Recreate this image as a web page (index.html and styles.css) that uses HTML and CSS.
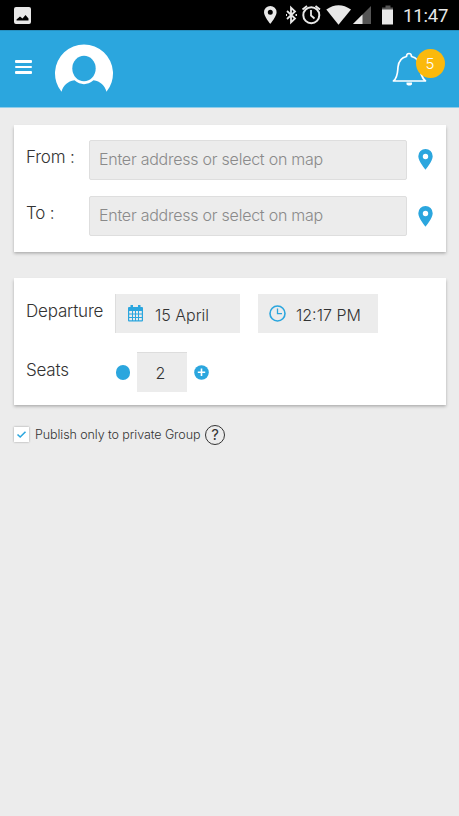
FILE: index.html
```html
<!DOCTYPE html>
<html lang="en">
<head>
<meta charset="utf-8">
<title>Publish a ride</title>
<link rel="stylesheet" href="styles.css">
</head>
<body>
<div class="status">
  <svg class="photo" width="17" height="17" viewBox="0 0 17 17"><path fill="#e8e8e8" fill-rule="evenodd" d="M2 0H15Q17 0 17 2V15Q17 17 15 17H2Q0 17 0 15V2Q0 0 2 0ZM2.500 13.500H14.500V11.500L11.500 8 8.500 11.500 6 9.500 2.500 12.500Z"/></svg>
  <svg class="icons" width="131" height="22" viewBox="262 4 131 22" fill="#e8e8e8">
    <path fill-rule="evenodd" d="M270.300 6a6.300 6.300 0 0 1 6.300 6.300C276.600 16.500 270.300 24 270.300 24S264 16.500 264 12.300A6.300 6.300 0 0 1 270.300 6ZM270.300 9.700a2.500 2.500 0 1 0 0 5 2.500 2.500 0 0 0 0-5Z"/>
    <path fill="none" stroke="#e8e8e8" stroke-width="1.800" d="M287 11 295 18.500 291 22.300V7.700L295 11.500 287 19M286 15h1M295.500 15h1.500"/>
    <circle cx="311.300" cy="15.200" r="8" fill="none" stroke="#e8e8e8" stroke-width="2"/>
    <path fill="none" stroke="#e8e8e8" stroke-width="1.800" d="M311 10V15.500L314.500 18.500M302.500 9.500 307 6M320 9.500 315.500 6"/>
    <path d="M326.300 9.500Q338.500 1 351 9.500L338.500 24.800Z"/>
    <path fill="#555" d="M371 6V24H353Z"/><path d="M362.500 14.500V24H353Z"/>
    <path fill="#555" d="M385.500 5.500h5v2H394v3H382v-3h3.500z"/><path d="M382 9.500H394V24.500H382Z"/>
  </svg>
  <span class="clock">11:47</span>
</div>
<header class="header">
  <div class="menu"><i></i><i></i><i></i></div>
  <svg class="avatar" width="60" height="50" viewBox="54 42.500 60 50"><path fill="#fff" fill-rule="evenodd" d="M61.500 91.300A29 29 0 1 1 106.500 91.300C104.500 84.500 100.500 81 93.500 79.800Q84 87.500 74.500 79.800C67.500 81 63.500 84.500 61.500 91.300Z"/><ellipse cx="84" cy="68" rx="11.700" ry="12.700" fill="#2ba6de"/></svg>
  <div class="bell">
    <svg width="36" height="36" viewBox="392 51 36 36"><path fill="none" stroke="#fff" stroke-width="1.700" stroke-linejoin="round" d="M393.500 81C398 77 397.500 72 398 67Q399 58 406.500 56.500Q406.500 53.500 409 53.500T411.500 56.500Q419 58 420 67C420.500 72 421 77 425.500 81Z"/><path fill="#fff" d="M406.500 82.500h5.500v2l-1.500 1h-2.500l-1.500-1z"/></svg>
    <span class="badge">5</span>
  </div>
</header>
<main>
  <section class="card">
    <div class="row">
      <label class="from">From :</label><div class="input">Enter address or select on map</div>
      <svg class="pin" width="15" height="21" viewBox="0 0 15 21"><path fill="#2ba6de" fill-rule="evenodd" d="M7.500 0A7.200 7.200 0 0 1 14.700 7.200C14.700 12 7.500 20.700 7.500 20.700S.300 12 .300 7.200A7.200 7.200 0 0 1 7.500 0ZM7.500 4.800a2.700 2.700 0 1 0 0 5.400 2.700 2.700 0 0 0 0-5.400Z"/></svg>
    </div>
    <div class="row">
      <label class="to">To :</label><div class="input">Enter address or select on map</div>
      <svg class="pin low" width="15" height="21" viewBox="0 0 15 21"><path fill="#2ba6de" fill-rule="evenodd" d="M7.500 0A7.200 7.200 0 0 1 14.700 7.200C14.700 12 7.500 20.700 7.500 20.700S.300 12 .300 7.200A7.200 7.200 0 0 1 7.500 0ZM7.500 4.800a2.700 2.700 0 1 0 0 5.400 2.700 2.700 0 0 0 0-5.400Z"/></svg>
    </div>
  </section>
  <section class="card second">
    <div class="row">
      <label class="dep">Departure</label>
      <div class="field date">
        <svg width="15" height="17" viewBox="0 0 15 17"><path fill="#2ba6de" fill-rule="evenodd" d="M1 2H2.500V0H5V2H10V0H12.500V2H14Q15 2 15 3V15.500Q15 16.500 14 16.500H1Q0 16.500 0 15.500V3Q0 2 1 2ZM1.200 6V8.500H4V6ZM5 6V8.500H7V6ZM8 6V8.500H10V6ZM11 6V8.500H13.800V6ZM1.200 9.500V12H4V9.500ZM5 9.500V12H7V9.500ZM8 9.500V12H10V9.500ZM11 9.500V12H13.800V9.500ZM1.200 13V15.300H4V13ZM5 13V15.300H7V13ZM8 13V15.300H10V13ZM11 13V15.300H13.800V13Z"/></svg>
        <span>15 April</span>
      </div>
      <div class="field time">
        <svg width="17" height="17" viewBox="0 0 17 17" fill="none" stroke="#2ba6de" stroke-width="1.600"><circle cx="8.500" cy="8.500" r="7.500"/><path stroke-width="1.300" d="M8.500 3.500V8.700H13"/></svg>
        <span>12:17 PM</span>
      </div>
    </div>
    <div class="row seats">
      <label class="seat">Seats</label>
      <span class="dot"></span>
      <div class="count">2</div>
      <svg class="plus" width="15" height="15" viewBox="0 0 15 15"><circle cx="7.500" cy="7.500" r="7.300" fill="#2ba6de"/><path stroke="#fff" stroke-width="1.600" d="M3.800 7.300H11.200M7.500 3.600V11"/></svg>
    </div>
  </section>
  <div class="publish">
    <span class="box"><svg width="15" height="15" viewBox="0 0 15 15"><path fill="none" stroke="#2ba6de" stroke-width="1.600" d="M3.500 7.500 6.200 10 11.500 4.800"/></svg></span>
    <span class="ptext">Publish only to private Group</span>
    <span class="help">?</span>
  </div>
</main>
</body>
</html>
```
FILE: styles.css
```css
* { box-sizing: border-box; }
body { margin: 0; background: #ececec; color: #333; font-family: Inter, "Liberation Sans", sans-serif; font-weight: 300; font-size: 16px; width: 459px; height: 816px; overflow: hidden; }
svg { display: block; flex: none; }
.status { height: 30px; background: #000; display: flex; align-items: center; padding-left: 14px; }
.icons { margin-left: 231px; }
.clock { margin-left: 10px; color: #e8e8e8; font: 400 18.500px/30px Roboto, sans-serif; letter-spacing: -.15px; padding-top: 2px; white-space: nowrap; }
.header { height: 78px; background: #2ba6de; border-bottom: 1px solid #8fcdea; border-top: 1px solid #2790c0; display: flex; align-items: flex-start; padding-left: 15px; }
.menu { width: 17px; display: grid; gap: 3px; margin-top: 29px; }
.menu i { height: 2.500px; background: #fff; border-radius: 1px; }
.avatar { margin: 12px 0 0 22px; }
.bell { position: relative; margin: 20px 0 0 278px; }
.badge { position: absolute; left: 23.500px; top: -2px; width: 29px; height: 29px; border-radius: 50%; background: #fbb90c; color: #fff; font-size: 15px; line-height: 30px; text-align: center; }
main { padding: 17px 13px 0 14px; }
.card { height: 127px; background: #fff; padding: 15px 12px; box-shadow: 0 1.500px 3px #aaa; }
.second { margin-top: 26px; padding-top: 16px; }
.row { display: flex; height: 40px; align-items: flex-start; }
.row + .row { margin-top: 16px; }
label { width: 63px; padding-top: 7px; font-size: 17px; line-height: 21px; letter-spacing: -.2px; white-space: nowrap; flex: none; }
.input { width: 318px; height: 40px; border: 1px solid #dedede; border-radius: 2px; background: #ececec; color: #8a8a8a; padding-left: 9px; line-height: 37px; letter-spacing: -.24px; white-space: nowrap; }
.pin { margin: 9px 0 0 10.500px; }
.low { margin-top: 10px; }
.dep, .seat { width: 89px; }
.field { height: 39px; background: #ececec; display: flex; align-items: center; white-space: nowrap; }
.field span { padding-top: 2px; }
.date { width: 125px; border-left: 1px solid #ddd; padding-left: 12px; gap: 12px; }
.time { width: 120px; margin-left: 17.500px; padding-left: 11.500px; gap: 10px; }
.seats { padding-top: 2px; }
.seat { padding-top: 8px; }
.dot { width: 14.500px; height: 14.500px; border-radius: 50%; background: #2ba6de; margin: 13px 0 0 .5px; }
.count { width: 50px; height: 40px; margin-left: 7px; background: #ececec; border-top: 1px solid #ddd; line-height: 41px; text-align: center; padding-right: 3px; font-size: 16px; }
.plus { margin: 13px 0 0 7px; }
.publish { display: flex; align-items: center; height: 20px; margin-top: 20px; }
.box { width: 15px; height: 15px; background: #fff; box-shadow: 0 0 2px #999; margin-top: -2px; }
.ptext { margin-left: 6px; width: 170px; font-size: 12.500px; letter-spacing: -.08px; margin-top: -2px; white-space: nowrap; }
.help { width: 20px; height: 20px; border: 1.500px solid #333; border-radius: 50%; text-align: center; font-size: 15px; line-height: 17px; font-weight: 400; }
```
